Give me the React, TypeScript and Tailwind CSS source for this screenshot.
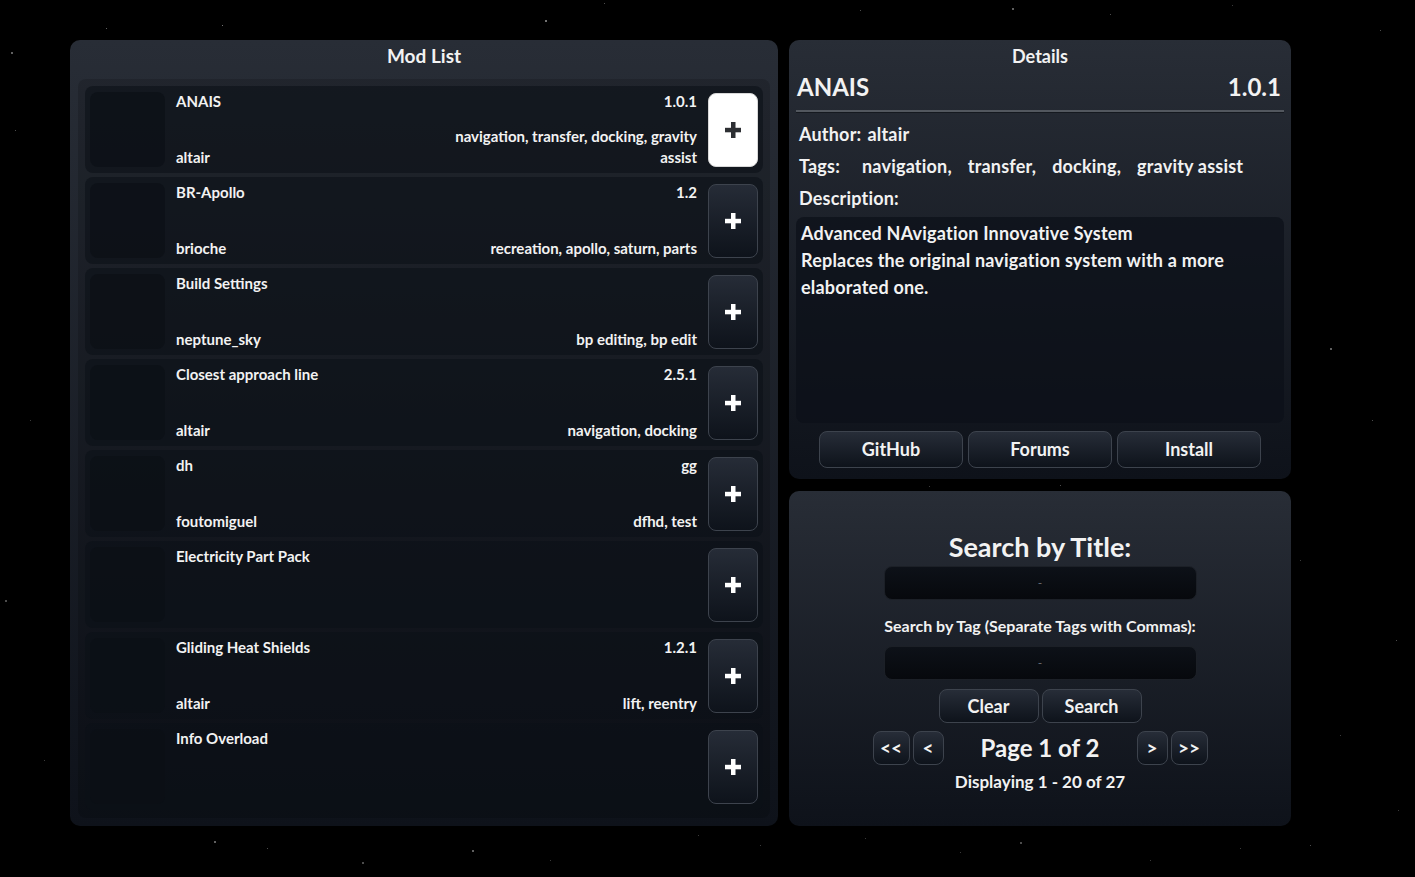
import React from 'react';

type Mod = { name: string; version: string; author: string; tags: string };

const mods: Mod[] = [
  { name: 'ANAIS', version: '1.0.1', author: 'altair', tags: 'navigation, transfer, docking, gravity assist' },
  { name: 'BR-Apollo', version: '1.2', author: 'brioche', tags: 'recreation, apollo, saturn, parts' },
  { name: 'Build Settings', version: '', author: 'neptune_sky', tags: 'bp editing, bp edit' },
  { name: 'Closest approach line', version: '2.5.1', author: 'altair', tags: 'navigation, docking' },
  { name: 'dh', version: 'gg', author: 'foutomiguel', tags: 'dfhd, test' },
  { name: 'Electricity Part Pack', version: '', author: '', tags: '' },
  { name: 'Gliding Heat Shields', version: '1.2.1', author: 'altair', tags: 'lift, reentry' },
  { name: 'Info Overload', version: '', author: '', tags: '' },
];

// background star field (x, y, size, opacity)
const stars: [number, number, number, number][] = [
  [106, 28, 1, 0.5], [222, 25, 1, 0.6], [11, 52, 2, 0.5], [545, 20, 2, 0.6], [604, 3, 1, 0.4],
  [860, 10, 1, 0.4], [1012, 8, 2, 0.5], [1110, 14, 1, 0.4], [1232, 5, 1, 0.3], [1380, 30, 1, 0.4],
  [1330, 348, 2, 0.5], [1372, 420, 1, 0.4], [1300, 560, 1, 0.3], [1396, 640, 1, 0.4], [1340, 735, 1, 0.3],
  [1310, 845, 1, 0.4], [1398, 810, 1, 0.3], [15, 130, 1, 0.4], [30, 420, 1, 0.3], [5, 600, 2, 0.4],
  [44, 760, 1, 0.3], [214, 841, 2, 0.5], [267, 848, 1, 0.4], [362, 862, 2, 0.4], [472, 850, 2, 0.5],
  [550, 860, 1, 0.3], [698, 835, 1, 0.3], [760, 845, 1, 0.3], [865, 838, 1, 0.3], [960, 852, 1, 0.3],
  [1020, 842, 2, 0.4], [1150, 860, 1, 0.3], [1240, 848, 1, 0.3], [1060, 485, 1, 0.4], [929, 486, 1, 0.3],
];

const Plus = ({ dark }: { dark?: boolean }) => (
  <svg width="16" height="16" viewBox="0 0 16 16">
    <rect x="6" y="0" width="4.5" height="16" fill={dark ? '#2d2f33' : '#ffffff'} />
    <rect x="0" y="5.8" width="16" height="4.5" fill={dark ? '#2d2f33' : '#ffffff'} />
  </svg>
);

const btn =
  'rounded-lg border border-[#3d434d] bg-gradient-to-b from-[#272d38] to-[#0e131b] text-[#f2f2f2] font-bold flex items-center justify-center';

const ModRow = ({ mod, selected }: { mod: Mod; selected?: boolean }) => (
  <div className="h-[87px] shrink-0 rounded-lg bg-[#0c1018]/60 flex items-center pl-[5px] pr-[5px] gap-[11px]">
    <div className="w-[75px] h-[75px] rounded-lg bg-[#0b0f16]/70 shrink-0" />
    <div className="flex-1 h-full flex flex-col justify-between py-[5px] text-[15px] leading-[21px] font-bold text-[#f2f2f2]">
      <div className="flex justify-between">
        <span>{mod.name}</span>
        <span>{mod.version}</span>
      </div>
      <div className="flex justify-between items-end">
        <span>{mod.author}</span>
        <span className="max-w-[255px] text-right">{mod.tags}</span>
      </div>
    </div>
    <button
      className={
        selected
          ? 'w-[50px] h-[74px] shrink-0 rounded-lg bg-white border border-[#d8d8d8] flex items-center justify-center'
          : 'w-[50px] h-[74px] shrink-0 rounded-lg border border-[#3d434d] bg-gradient-to-b from-[#262c37] to-[#0e131b] flex items-center justify-center'
      }
    >
      <Plus dark={selected} />
    </button>
  </div>
);

const panel = 'rounded-[10px] bg-gradient-to-b from-[#282d36] to-[#0e121a]';

export default function App() {
  return (
    <div
      className="relative min-h-[877px] w-full bg-black overflow-hidden text-[#f2f2f2]"
      style={{ fontFamily: 'Lato, "Open Sans", sans-serif' }}
    >
      {stars.map(([x, y, s, o], i) => (
        <div
          key={i}
          className="absolute rounded-full bg-white"
          style={{ left: x, top: y, width: s, height: s, opacity: o }}
        />
      ))}

      <div className="relative flex gap-[11px] pl-[70px] pt-[40px]">
        {/* Mod list */}
        <div className={`${panel} w-[708px] h-[786px] flex flex-col px-[8px] pb-[8px]`}>
          <h2 className="h-[32px] flex items-center justify-center text-[19px] font-bold">Mod List</h2>
          <div className="mt-[7px] flex-1 rounded-lg bg-black/15 px-[7px] pt-[7px] flex flex-col gap-[4px] overflow-hidden">
            {mods.map((m, i) => (
              <ModRow key={m.name} mod={m} selected={i === 0} />
            ))}
          </div>
        </div>

        {/* Right column */}
        <div className="w-[502px] flex flex-col gap-[12px]">
          {/* Details */}
          <div className={`${panel} h-[439px] flex flex-col px-[7px]`}>
            <h2 className="h-[32px] flex items-center justify-center text-[18px] font-bold">Details</h2>
            <div className="flex justify-between items-center h-[30px] text-[24px] font-bold px-[1px] pr-[3px]">
              <span>ANAIS</span>
              <span>1.0.1</span>
            </div>
            <div className="mt-[8px] h-[3px] border-t-2 border-[#52575e] border-b border-b-[#15191f]" />
            <div className="px-[3px] mt-[5px] text-[18px] font-bold leading-[32px] tracking-[0.2px]">
              <div className="flex gap-[6px]">
                <span>Author:</span>
                <span>altair</span>
              </div>
              <div className="flex gap-[16px]">
                <span className="mr-[6px]">Tags:</span>
                <span>navigation,</span>
                <span>transfer,</span>
                <span>docking,</span>
                <span>gravity assist</span>
              </div>
              <div>Description:</div>
            </div>
            <div className="mt-[3px] h-[206px] rounded-lg bg-[#0c1018]/70 px-[5px] py-[3px] text-[18px] font-bold leading-[27px] tracking-[0.2px]">
              Advanced NAvigation Innovative System
              <br />
              Replaces the original navigation system with a more elaborated one.
            </div>
            <div className="flex justify-center gap-[5px] mt-[8px] text-[18px]">
              <button className={`${btn} w-[144px] h-[37px]`}>GitHub</button>
              <button className={`${btn} w-[144px] h-[37px]`}>Forums</button>
              <button className={`${btn} w-[144px] h-[37px]`}>Install</button>
            </div>
          </div>

          {/* Search */}
          <div className={`${panel} h-[335px] flex flex-col items-center pt-[38px]`}>
            <h2 className="text-[27px] font-bold leading-[36px]">Search by Title:</h2>
            <div className="mt-[1px] w-[313px] h-[34px] rounded-lg bg-gradient-to-b from-[#0d1118] to-[#07090d] border border-[#1c2027] flex items-center justify-center text-[#6b6f76] text-[12px]">
              -
            </div>
            <div className="mt-[16px] text-[16px] font-bold leading-[20px]">
              Search by Tag (Separate Tags with Commas):
            </div>
            <div className="mt-[10px] w-[313px] h-[34px] rounded-lg bg-gradient-to-b from-[#0d1118] to-[#07090d] border border-[#1c2027] flex items-center justify-center text-[#6b6f76] text-[12px]">
              -
            </div>
            <div className="mt-[9px] flex gap-[3px] text-[18px]">
              <button className={`${btn} w-[100px] h-[34px]`}>Clear</button>
              <button className={`${btn} w-[100px] h-[34px]`}>Search</button>
            </div>
            <div className="mt-[7px] flex items-center text-[19px]">
              <button className={`${btn} w-[37px] h-[34px]`}>&lt;&lt;</button>
              <button className={`${btn} w-[31px] h-[34px] ml-[3px]`}>&lt;</button>
              <span className="w-[193px] text-center text-[24px] font-bold">Page 1 of 2</span>
              <button className={`${btn} w-[31px] h-[34px]`}>&gt;</button>
              <button className={`${btn} w-[37px] h-[34px] ml-[3px]`}>&gt;&gt;</button>
            </div>
            <div className="mt-[4px] text-[17px] font-bold leading-[24px]">Displaying 1 - 20 of 27</div>
          </div>
        </div>
      </div>
    </div>
  );
}
